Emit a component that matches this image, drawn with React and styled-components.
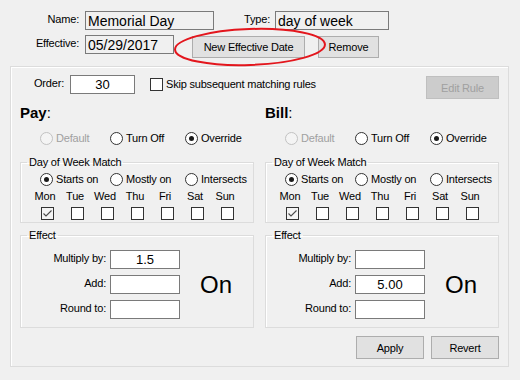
import styled, { createGlobalStyle } from "styled-components";

const GlobalStyle = createGlobalStyle`
  html, body {
    margin: 0;
    padding: 0;
    background: #f0f0f0;
  }
  body {
    font-family: "Liberation Sans", Arial, sans-serif;
    font-size: 11px;
    letter-spacing: -0.2px;
    color: #000;
  }
`;

const DAYS = ["Mon", "Tue", "Wed", "Thu", "Fri", "Sat", "Sun"];

function Radio({ label, checked, disabled, width }) {
    return (
        <Option $width={width} $disabled={disabled}>
            <RadioDot $checked={checked} $disabled={disabled} />
            <span>{label}</span>
        </Option>
    );
}

function CheckMark() {
    return (
        <svg width="11" height="11" viewBox="0 0 11 11">
            <path d="M1.5 5.5 L4 8 L9.5 2.5" fill="none" stroke="#4a4a4a" strokeWidth="1.1" />
        </svg>
    );
}

function RulePanel({ title, multiply, add }) {
    return (
        <Column>
            <Heading>
                {title}
                <Colon>:</Colon>
            </Heading>
            <RadioRow $pad={20}>
                <Radio label="Default" disabled width={70} />
                <Radio label="Turn Off" width={75} />
                <Radio label="Override" checked />
            </RadioRow>

            <Group $top={11}>
                <Legend>Day of Week Match</Legend>
                <RadioRow $pad={19} $top={3}>
                    <Radio label="Starts on" checked width={70} />
                    <Radio label="Mostly on" width={75} />
                    <Radio label="Intersects" />
                </RadioRow>
                <DayRow>
                    {DAYS.map((d, i) => (
                        <DayCell key={d}>
                            <DayLabel>{d}</DayLabel>
                            <CheckBox $checked={i === 0}>{i === 0 && <CheckMark />}</CheckBox>
                        </DayCell>
                    ))}
                </DayRow>
            </Group>

            <Group $top={6}>
                <Legend>Effect</Legend>
                <EffectGrid>
                    <EffectLabel>Multiply by:</EffectLabel>
                    <TextBox $width={70} $align="center" $size={13}>{multiply}</TextBox>
                    <OnText>On</OnText>
                    <EffectLabel>Add:</EffectLabel>
                    <TextBox $width={70} $align="center" $size={13}>{add}</TextBox>
                    <EffectLabel>Round to:</EffectLabel>
                    <TextBox $width={70} $align="center" $size={13} />
                </EffectGrid>
            </Group>
        </Column>
    );
}

export default function App() {
    return (
        <Window>
            <GlobalStyle />
            <TopRow $height={19} $top={11}>
                <FieldLabel $width={79} $gap={6}>Name:</FieldLabel>
                <TextBox $width={129} $bg="#f0f0f0">Memorial Day</TextBox>
                <FieldLabel $width={56} $gap={5}>Type:</FieldLabel>
                <TextBox $width={114} $bg="#f0f0f0">day of week</TextBox>
            </TopRow>
            <TopRow $height={24} $top={5}>
                <FieldLabel $width={79} $gap={6}>Effective:</FieldLabel>
                <TextBox $width={89} $bg="#f0f0f0">05/29/2017</TextBox>
                <Button $width={113} $left={18} $top={1}>New Effective Date</Button>
                <Button $width={61} $left={13} $top={1}>Remove</Button>
            </TopRow>

            <Highlight width="160" height="46" viewBox="0 0 160 46">
                <ellipse
                    cx="80"
                    cy="22"
                    rx="75"
                    ry="18"
                    fill="none"
                    stroke="#e3161d"
                    strokeWidth="2"
                    transform="rotate(-2 80 22)"
                />
            </Highlight>

            <MainBox>
                <OrderRow>
                    <FieldLabel $width={44} $gap={6}>Order:</FieldLabel>
                    <TextBox $width={65} $align="center" $size={13}>30</TextBox>
                    <CheckBox $left={15} $top={3} />
                    <CheckText>Skip subsequent matching rules</CheckText>
                    <Button $width={73} $height={23} $left="auto" $top={1} disabled>Edit Rule</Button>
                </OrderRow>

                <Columns>
                    <RulePanel title="Pay" multiply="1.5" add="" />
                    <RulePanel title="Bill" multiply="" add="5.00" />
                    <ButtonRow>
                        <Button $width={68} $height={23}>Apply</Button>
                        <Button $width={68} $height={23}>Revert</Button>
                    </ButtonRow>
                </Columns>
            </MainBox>
        </Window>
    );
}

const Window = styled.div`
    position: relative;
    width: 520px;
    height: 380px;
    overflow: hidden;
`;

const TopRow = styled.div`
    display: flex;
    align-items: flex-start;
    height: ${p => p.$height}px;
    margin-top: ${p => p.$top}px;
`;

const FieldLabel = styled.div`
    width: ${p => p.$width}px;
    margin-right: ${p => p.$gap}px;
    text-align: right;
    line-height: 17px;
    flex-shrink: 0;
    white-space: nowrap;
`;

const TextBox = styled.div`
    box-sizing: border-box;
    width: ${p => p.$width}px;
    height: 19px;
    border: 1px solid #7a7a7a;
    background: ${p => p.$bg || "#fff"};
    padding: 0 2px;
    font-size: ${p => p.$size || 14}px;
    line-height: 18px;
    letter-spacing: 0;
    text-align: ${p => p.$align || "left"};
    white-space: nowrap;
    overflow: hidden;
    flex-shrink: 0;
`;

const Button = styled.button`
    box-sizing: border-box;
    width: ${p => p.$width}px;
    height: ${p => p.$height || 22}px;
    margin-left: ${p => (p.$left === "auto" ? "auto" : `${p.$left || 0}px`)};
    margin-top: ${p => p.$top || 0}px;
    padding: 0;
    border: 1px solid ${p => (p.disabled ? "#bfbfbf" : "#adadad")};
    background: ${p => (p.disabled ? "#cccccc" : "#e1e1e1")};
    color: ${p => (p.disabled ? "#a0a0a0" : "#000")};
    font-family: inherit;
    font-size: 11px;
    letter-spacing: -0.2px;
    flex-shrink: 0;
`;

const Highlight = styled.svg`
    position: absolute;
    left: 170px;
    top: 25px;
    pointer-events: none;
`;

const MainBox = styled.div`
    box-sizing: border-box;
    width: 499px;
    height: 301px;
    margin: 7px 0 0 10px;
    padding: 8px 9px 0 9px;
    border: 1px solid #dcdcdc;
    box-shadow: inset 1px 1px 0 #fff;
`;

const OrderRow = styled.div`
    display: flex;
    align-items: flex-start;
    height: 24px;
`;

const CheckBox = styled.div`
    box-sizing: border-box;
    width: 13px;
    height: 13px;
    margin-left: ${p => p.$left || 0}px;
    margin-top: ${p => p.$top || 0}px;
    border: 1px solid #333;
    background: ${p => (p.$checked ? "#f4f4f4" : "#fff")};
    display: flex;
    align-items: center;
    justify-content: center;
    flex-shrink: 0;
`;

const CheckText = styled.span`
    margin-left: 3px;
    line-height: 19px;
`;

const Columns = styled.div`
    display: grid;
    grid-template-columns: 234px 234px;
    column-gap: 11px;
`;

const Column = styled.div`
    display: flex;
    flex-direction: column;
`;

const Heading = styled.div`
    margin-top: 5px;
    font-size: 15px;
    font-weight: bold;
    line-height: 17px;
    letter-spacing: 0;
`;

const Colon = styled.span`
    font-weight: normal;
`;

const RadioRow = styled.div`
    display: flex;
    align-items: center;
    height: 14px;
    margin-top: ${p => (p.$top !== undefined ? p.$top : 10)}px;
    padding-left: ${p => p.$pad}px;
`;

const Option = styled.div`
    display: flex;
    align-items: center;
    gap: 3px;
    width: ${p => (p.$width ? `${p.$width}px` : "auto")};
    color: ${p => (p.$disabled ? "#a0a0a0" : "#000")};
    white-space: nowrap;
`;

const RadioDot = styled.span`
    position: relative;
    box-sizing: border-box;
    width: 13px;
    height: 13px;
    border-radius: 50%;
    border: 1px solid ${p => (p.$disabled ? "#c2c2c2" : "#333")};
    background: ${p => (p.$disabled ? "#f4f4f4" : "#fff")};
    flex-shrink: 0;

    &::after {
        content: "";
        display: ${p => (p.$checked ? "block" : "none")};
        position: absolute;
        left: 3px;
        top: 3px;
        width: 5px;
        height: 5px;
        border-radius: 50%;
        background: #1a1a1a;
    }
`;

const Group = styled.fieldset`
    margin: ${p => p.$top}px 0 0 0;
    padding: 0;
    min-width: 0;
    border: 1px solid #dcdcdc;
    box-shadow: inset 1px 1px 0 #fff;
`;

const Legend = styled.legend`
    margin-left: 6px;
    padding: 0 2px;
    line-height: 13px;
    font-size: 11px;
`;

const DayRow = styled.div`
    display: flex;
    padding: 0 0 2px 11px;
    margin-top: 4px;
`;

const DayCell = styled.div`
    display: flex;
    flex-direction: column;
    align-items: center;
    width: 30px;
`;

const DayLabel = styled.span`
    line-height: 13px;
    padding-right: 4px;
    margin-bottom: 4px;
`;

const EffectGrid = styled.div`
    display: grid;
    grid-template-columns: 85px 70px auto;
    column-gap: 4px;
    row-gap: 6px;
    padding: 8px 0 8px 0;
`;

const EffectLabel = styled.div`
    text-align: right;
    line-height: 17px;
    white-space: nowrap;
`;

const OnText = styled.div`
    grid-column: 3;
    grid-row: 1 / 4;
    align-self: center;
    margin-left: 16px;
    font-size: 24px;
    line-height: 26px;
    letter-spacing: 0;
`;

const ButtonRow = styled.div`
    grid-column: 1 / -1;
    display: flex;
    justify-content: flex-end;
    gap: 7px;
    margin-top: 8px;
`;
